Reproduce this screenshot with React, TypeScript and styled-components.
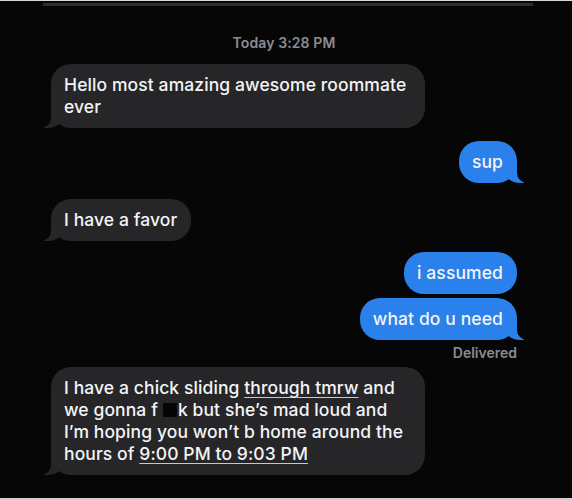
import React from "react";
import styled, { createGlobalStyle, css } from "styled-components";

const PAGE_BG = "#060606";
const GRAY = "#262629";
const BLUE = "#2a81ec";

const GlobalStyle = createGlobalStyle`
  html, body {
    margin: 0;
    padding: 0;
    background: ${PAGE_BG};
  }
  body {
    font-family: Inter, "Liberation Sans", Arial, sans-serif;
    -webkit-font-smoothing: antialiased;
  }
`;

const Screen = styled.div`
  width: 572px;
  height: 500px;
  background: ${PAGE_BG};
  display: flex;
  flex-direction: column;
  overflow: hidden;
  box-sizing: border-box;
  border-top: 1px solid #d8d8d8;
  border-bottom: 2px solid #cfcfcf;
`;

const StatusBar = styled.div`
  height: 3px;
  margin: 2px 39px 0 43px;
  background: #2e2e30;
`;

const Thread = styled.div`
  display: flex;
  flex-direction: column;
  padding: 0 55px 0 51px;
`;

const Stamp = styled.div`
  margin-top: 28px;
  text-align: center;
  font-size: 14px;
  font-weight: 600;
  color: #8c8c91;
  letter-spacing: 0.1px;
`;

const Row = styled.div<{ $side: "in" | "out"; $mt: number }>`
  display: flex;
  justify-content: ${(p) => (p.$side === "in" ? "flex-start" : "flex-end")};
  margin-top: ${(p) => p.$mt}px;
`;

const tailIn = css`
  &::before {
    left: -7px;
    background: ${GRAY};
    border-bottom-right-radius: 16px 14px;
  }
  &::after {
    left: -26px;
    border-bottom-right-radius: 10px;
  }
`;

const tailOut = css`
  &::before {
    right: -7px;
    background: ${BLUE};
    border-bottom-left-radius: 16px 14px;
  }
  &::after {
    right: -26px;
    border-bottom-left-radius: 10px;
  }
`;

const Bubble = styled.div<{ $side: "in" | "out"; $tail?: boolean; $width?: number }>`
  position: relative;
  box-sizing: border-box;
  width: ${(p) => (p.$width ? `${p.$width}px` : "auto")};
  padding: 10px 14px 10px 13px;
  border-radius: 20px;
  background: ${(p) => (p.$side === "in" ? GRAY : BLUE)};
  color: #f4f4f6;
  font-size: 17.5px;
  font-weight: 500;
  line-height: 22px;
  letter-spacing: 0.1px;

  &::before,
  &::after {
    content: "";
    position: absolute;
    bottom: 0;
    height: 20px;
    display: ${(p) => (p.$tail ? "block" : "none")};
  }
  &::before {
    width: 20px;
    z-index: 0;
  }
  &::after {
    width: 26px;
    background: ${PAGE_BG};
    z-index: 1;
  }

  ${(p) => (p.$side === "in" ? tailIn : tailOut)}
`;

const Text = styled.span`
  position: relative;
  z-index: 2;
`;

const Link = styled.span`
  text-decoration: underline;
  text-decoration-thickness: 1px;
  text-underline-offset: 3px;
  text-decoration-color: #c9c9cc;
`;

const Censor = styled.span`
  display: inline-block;
  width: 14px;
  height: 14px;
  margin: 0 1px 0 5px;
  background: #040404;
  vertical-align: -1px;
`;

const Status = styled.div`
  margin-top: 4px;
  text-align: right;
  font-size: 14px;
  font-weight: 600;
  color: #8c8c91;
`;

export default function App() {
  return (
    <>
      <GlobalStyle />
      <Screen>
        <StatusBar />
        <Thread>
          <Stamp>Today 3:28 PM</Stamp>
          <Row $side="in" $mt={13}>
            <Bubble $side="in" $tail $width={374}>
              <Text>
                Hello most amazing awesome roommate
                <br />
                ever
              </Text>
            </Bubble>
          </Row>
          <Row $side="out" $mt={13}>
            <Bubble $side="out" $tail>
              <Text>sup</Text>
            </Bubble>
          </Row>
          <Row $side="in" $mt={16}>
            <Bubble $side="in" $tail>
              <Text>I have a favor</Text>
            </Bubble>
          </Row>
          <Row $side="out" $mt={11}>
            <Bubble $side="out">
              <Text>i assumed</Text>
            </Bubble>
          </Row>
          <Row $side="out" $mt={4}>
            <Bubble $side="out" $tail>
              <Text>what do u need</Text>
            </Bubble>
          </Row>
          <Status>Delivered</Status>
          <Row $side="in" $mt={6}>
            <Bubble $side="in" $tail $width={374}>
              <Text>
                I have a chick sliding <Link>through tmrw</Link> and
                <br />
                we gonna f<Censor />k but she’s mad loud and
                <br />
                I’m hoping you won’t b home around the
                <br />
                hours of <Link>9:00 PM to 9:03 PM</Link>
              </Text>
            </Bubble>
          </Row>
        </Thread>
      </Screen>
    </>
  );
}
